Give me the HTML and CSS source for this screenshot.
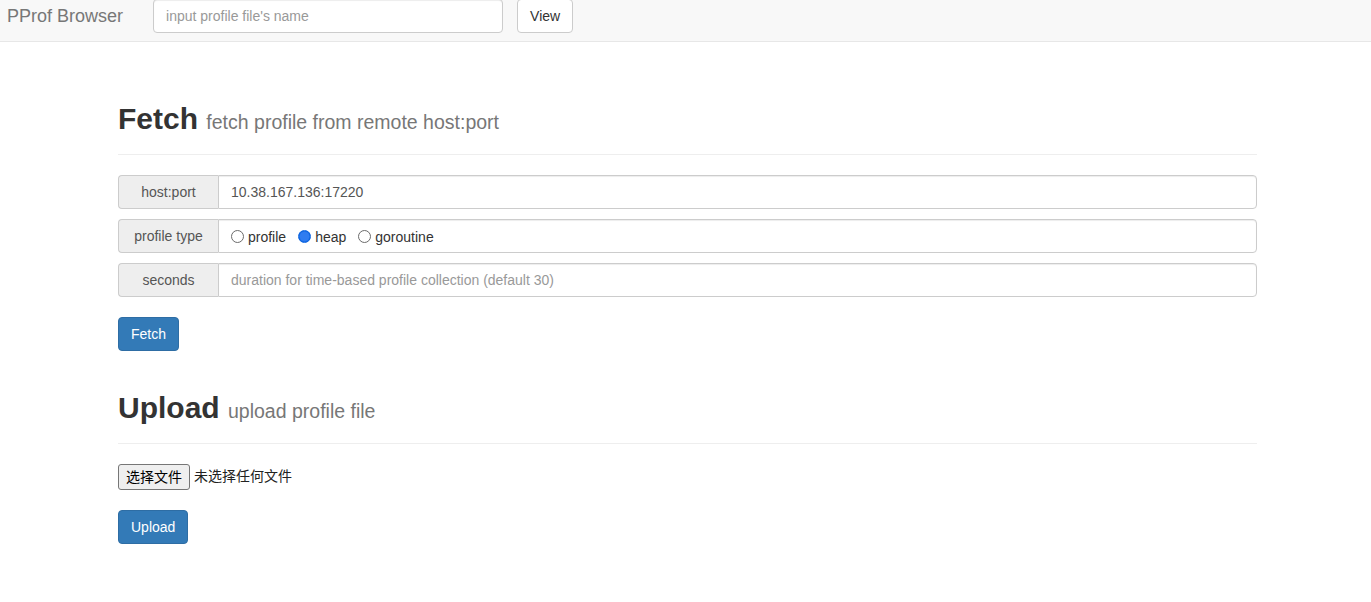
FILE: index.html
```html
<!DOCTYPE html>
<html lang="zh">
<head>
<meta charset="utf-8">
<title>PProf Browser</title>
<link rel="stylesheet" href="styles.css">
</head>
<body>
<nav class="navbar">
  <span class="brand">PProf Browser</span>
  <form class="nav-form">
    <input class="nav-input" type="text" placeholder="input profile file's name">
    <button type="button" class="btn btn-default">View</button>
  </form>
</nav>

<main class="container">
  <section>
    <div class="page-header">
      <h2>Fetch <small>fetch profile from remote host:port</small></h2>
    </div>
    <div class="input-group">
      <span class="addon">host:port</span>
      <input class="form-control" type="text" value="10.38.167.136:17220">
    </div>
    <div class="input-group">
      <span class="addon">profile type</span>
      <div class="form-control radios">
        <label class="radio"><span class="dot"></span>profile</label>
        <label class="radio"><span class="dot checked"></span>heap</label>
        <label class="radio"><span class="dot"></span>goroutine</label>
      </div>
    </div>
    <div class="input-group">
      <span class="addon">seconds</span>
      <input class="form-control" type="text" placeholder="duration for time-based profile collection (default 30)">
    </div>
    <button type="button" class="btn btn-primary fetch-btn">Fetch</button>
  </section>

  <section>
    <div class="page-header">
      <h2>Upload <small>upload profile file</small></h2>
    </div>
    <div class="file-row">
      <span class="file-btn">选择文件</span>
      <span class="file-label">未选择任何文件</span>
    </div>
    <button type="button" class="btn btn-primary">Upload</button>
  </section>
</main>
</body>
</html>
```

FILE: styles.css
```css
* { box-sizing: border-box; }
html, body { margin: 0; padding: 0; }
body {
  font-family: "Liberation Sans", Arial, "Noto Sans CJK SC", sans-serif;
  font-size: 14px;
  line-height: 1.42857;
  color: #333;
  background: #fff;
}

/* navbar */
.navbar {
  height: 42px;
  background: #f8f8f8;
  border-bottom: 1px solid #e7e7e7;
  display: flex;
  align-items: flex-start;
}
.brand {
  margin: 6px 0 0 7px;
  font-size: 18px;
  line-height: 20px;
  color: #777;
}
.nav-form {
  display: flex;
  margin: -1px 0 0 30px;
  gap: 14px;
}
.nav-input {
  width: 350px;
  height: 34px;
  padding: 6px 12px;
  font: inherit;
  font-size: 14px;
  color: #555;
  background: #fff;
  border: 1px solid #ccc;
  border-radius: 4px;
  box-shadow: inset 0 1px 1px rgba(0,0,0,.075);
  outline: none;
}
.nav-input::placeholder, .form-control::placeholder { color: #999; opacity: 1; }

/* buttons */
.btn {
  display: inline-block;
  height: 34px;
  padding: 6px 12px;
  font: inherit;
  font-size: 14px;
  line-height: 20px;
  border: 1px solid transparent;
  border-radius: 4px;
  cursor: pointer;
}
.btn-default { color: #333; background: #fff; border-color: #ccc; }
.btn-primary { color: #fff; background: #337ab7; border-color: #2e6da4; }

/* container */
.container {
  width: 1139px;
  margin: 0 auto;
  padding: 20px 0 0 4px;
  box-sizing: content-box;
}
.page-header {
  margin: 40px 0 20px;
  padding-bottom: 9px;
  border-bottom: 1px solid #eee;
}
.page-header h2 {
  margin: 0 0 10px;
  font-size: 30px;
  line-height: 33px;
  font-weight: bold;
  color: #333;
}
.page-header h2 small {
  font-size: 65%;
  line-height: 1;
  font-weight: normal;
  color: #777;
}

/* input groups */
.input-group {
  display: flex;
  margin-bottom: 10px;
}
.addon {
  flex: 0 0 100px;
  height: 34px;
  padding: 6px 12px;
  text-align: center;
  color: #555;
  background: #eee;
  border: 1px solid #ccc;
  border-right: 0;
  border-radius: 4px 0 0 4px;
  line-height: 20px;
  white-space: nowrap;
}
.form-control {
  flex: 1;
  height: 34px;
  padding: 6px 12px;
  font: inherit;
  font-size: 14px;
  line-height: 20px;
  color: #555;
  background: #fff;
  border: 1px solid #ccc;
  border-radius: 0 4px 4px 0;
  box-shadow: inset 0 1px 1px rgba(0,0,0,.075);
  outline: none;
}
.radios {
  display: flex;
  align-items: center;
  gap: 10px;
  padding-top: 8px;
  color: #333;
}
.radio {
  display: flex;
  align-items: center;
  gap: 4px;
  margin-right: 2px;
}
.dot {
  width: 13px;
  height: 13px;
  border-radius: 50%;
  border: 1px solid #6b6b6b;
  background: #fff;
  margin-top: -1px;
}
.dot.checked {
  border: 1px solid #0a63e0;
  background: radial-gradient(circle, #2f7cf0 0 55%, #0a63e0 75%);
}

.fetch-btn { margin-top: 10px; }

/* file row */
.file-row {
  display: flex;
  align-items: center;
  gap: 4px;
  margin-bottom: 20px;
  height: 26px;
}
.file-btn {
  height: 26px;
  padding: 1px 7px;
  font-size: 14px;
  line-height: 22px;
  color: #000;
  background: #efefef;
  border: 1px solid #767676;
  border-radius: 3px;
}
.file-label { font-size: 14px; color: #222; }
```
